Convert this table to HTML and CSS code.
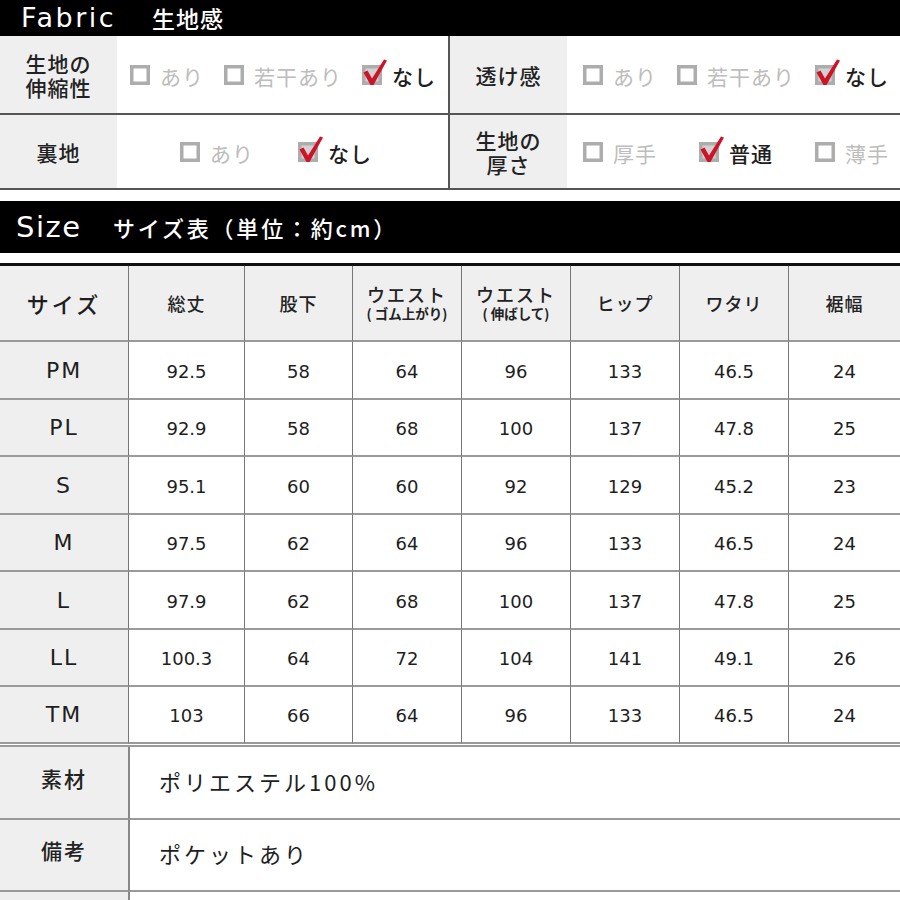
FILE: index.html
```html
<!DOCTYPE html>
<html lang="ja">
<head>
<meta charset="utf-8">
<title>Fabric / Size</title>
<link rel="stylesheet" href="styles.css">
</head>
<body>
<svg class="defs" width="0" height="0" aria-hidden="true">
  <symbol id="cb-off" viewBox="0 0 26 28">
    <rect x="1.75" y="7.75" width="16.5" height="16.5" fill="#fff" stroke="#adadad" stroke-width="3.5"/>
  </symbol>
  <symbol id="cb-on" viewBox="0 0 26 28">
    <rect x="1.75" y="7.75" width="16.5" height="16.5" fill="#d2d2d2" stroke="#adadad" stroke-width="3.5"/>
    <path d="M1.5 13.5 L5.5 11.5 L10 19.5 L22 0.5 L25 1.5 L11.5 26 L8.5 26 Z" fill="#cc1426"/>
  </symbol>
</svg>
<div class="page">
  <div class="bar bar-fabric"><span class="bar-en">Fabric</span><span class="bar-ja">生地感</span></div>
  <div class="fab">
    <div class="fab-row r1">
      <div class="fab-label">生地の<br>伸縮性</div>
      <div class="opts">
        <span class="opt off"><svg class="cb"><use href="#cb-off"/></svg>あり</span>
        <span class="opt off"><svg class="cb"><use href="#cb-off"/></svg>若干あり</span>
        <span class="opt on"><svg class="cb"><use href="#cb-on"/></svg>なし</span>
      </div>
      <div class="fab-label">透け感</div>
      <div class="opts right">
        <span class="opt off"><svg class="cb"><use href="#cb-off"/></svg>あり</span>
        <span class="opt off"><svg class="cb"><use href="#cb-off"/></svg>若干あり</span>
        <span class="opt on"><svg class="cb"><use href="#cb-on"/></svg>なし</span>
      </div>
    </div>
    <div class="fab-row r2">
      <div class="fab-label">裏地</div>
      <div class="opts pair">
        <span class="opt off"><svg class="cb"><use href="#cb-off"/></svg>あり</span>
        <span class="opt on"><svg class="cb"><use href="#cb-on"/></svg>なし</span>
      </div>
      <div class="fab-label">生地の<br>厚さ</div>
      <div class="opts right wide">
        <span class="opt off"><svg class="cb"><use href="#cb-off"/></svg>厚手</span>
        <span class="opt on"><svg class="cb"><use href="#cb-on"/></svg>普通</span>
        <span class="opt off"><svg class="cb"><use href="#cb-off"/></svg>薄手</span>
      </div>
    </div>
  </div>

  <div class="bar bar-size"><span class="bar-en">Size</span><span class="bar-ja">サイズ表（単位：約cm）</span></div>

  <div class="size-table">
    <div class="c h lab big">サイズ</div>
    <div class="c h">総丈</div>
    <div class="c h">股下</div>
    <div class="c h two"><span class="l1">ウエスト</span><span class="l2">( ゴム上がり)</span></div>
    <div class="c h two"><span class="l1">ウエスト</span><span class="l2">( 伸ばして)</span></div>
    <div class="c h">ヒップ</div>
    <div class="c h">ワタリ</div>
    <div class="c h last">裾幅</div>

    <div class="c lab">PM</div><div class="c n">92.5</div><div class="c n">58</div><div class="c n">64</div><div class="c n">96</div><div class="c n">133</div><div class="c n">46.5</div><div class="c n last">24</div>
    <div class="c lab">PL</div><div class="c n">92.9</div><div class="c n">58</div><div class="c n">68</div><div class="c n">100</div><div class="c n">137</div><div class="c n">47.8</div><div class="c n last">25</div>
    <div class="c lab">S</div><div class="c n">95.1</div><div class="c n">60</div><div class="c n">60</div><div class="c n">92</div><div class="c n">129</div><div class="c n">45.2</div><div class="c n last">23</div>
    <div class="c lab">M</div><div class="c n">97.5</div><div class="c n">62</div><div class="c n">64</div><div class="c n">96</div><div class="c n">133</div><div class="c n">46.5</div><div class="c n last">24</div>
    <div class="c lab">L</div><div class="c n">97.9</div><div class="c n">62</div><div class="c n">68</div><div class="c n">100</div><div class="c n">137</div><div class="c n">47.8</div><div class="c n last">25</div>
    <div class="c lab">LL</div><div class="c n">100.3</div><div class="c n">64</div><div class="c n">72</div><div class="c n">104</div><div class="c n">141</div><div class="c n">49.1</div><div class="c n last">26</div>
    <div class="c lab">TM</div><div class="c n">103</div><div class="c n">66</div><div class="c n">64</div><div class="c n">96</div><div class="c n">133</div><div class="c n">46.5</div><div class="c n last">24</div>
  </div>

  <div class="notes">
    <div class="note-label">素材</div><div class="note-val">ポリエステル100%</div>
    <div class="note-label">備考</div><div class="note-val">ポケットあり</div>
    <div class="note-label"></div><div class="note-val"></div>
  </div>
</div>
</body>
</html>
```

FILE: styles.css
```css
* { box-sizing: border-box; }
html, body { margin: 0; padding: 0; background: #fff; }
body {
  font-family: "Noto Sans CJK JP", "Noto Sans", sans-serif;
  color: #222;
}
.defs { position: absolute; width: 0; height: 0; overflow: hidden; }
.page { width: 900px; height: 900px; overflow: hidden; }

/* black section bars */
.bar {
  background: #000;
  color: #fff;
  display: flex;
  align-items: center;
}
.bar-fabric { height: 36px; padding-left: 21px; }
.bar-fabric .bar-en {
  font-family: "DejaVu Sans", sans-serif;
  font-size: 27px;
  letter-spacing: 2.5px;
  width: 131px;
  margin-top: -2px;
}
.bar-fabric .bar-ja { font-size: 23px; font-weight: 500; letter-spacing: 1px; }
.bar-size { height: 52px; margin-top: 11px; padding-left: 16px; }
.bar-size .bar-en {
  font-family: "DejaVu Sans", sans-serif;
  font-size: 29px;
  letter-spacing: 1.5px;
  width: 97px;
}
.bar-size .bar-ja { font-size: 22px; font-weight: 500; letter-spacing: 2.8px; }

/* fabric table */
.fab-row {
  display: grid;
  grid-template-columns: 117px 333px 117px 333px;
  border-bottom: 2px solid #555;
}
.fab-row.r1 { height: 79px; }
.fab-row.r2 { height: 75px; }
.fab-label {
  background: #efefef;
  display: flex;
  align-items: center;
  justify-content: center;
  text-align: center;
  font-size: 21px;
  line-height: 24px;
  font-weight: 500;
  letter-spacing: 1px;
  color: #222;
}
.opts {
  display: flex;
  align-items: center;
  padding-left: 13px;
  gap: 20px;
  border-right: 2px solid #555;
}
.opts.right { border-right: 0; padding-left: 16px; }
.opts.pair { padding-left: 63px; gap: 44px; }
.opts.wide { gap: 42px; }
.opt {
  display: flex;
  align-items: center;
  font-size: 21px;
  letter-spacing: 1px;
  white-space: nowrap;
  padding-top: 3px;
}
.opt.off { color: #bdbdbd; }
.opt.on { color: #1e1e1e; font-weight: 500; }
.cb { width: 26px; height: 28px; margin-right: 4px; margin-top: -6px; flex: none; }

/* size table */
.size-table {
  margin-top: 10px;
  border-top: 3px solid #111;
  display: grid;
  grid-template-columns: 129px 116px 108px 109px 109px 109px 109px 111px;
  grid-template-rows: 76px 58px 57px 58px 57px 58px 57px 57px;
}
.c {
  display: flex;
  align-items: center;
  justify-content: center;
  border-right: 1px solid #777;
  border-bottom: 2px solid #9a9a9a;
  text-align: center;
}
.c.last { border-right: 0; }
.c.h {
  background: #efefef;
  font-size: 18px;
  font-weight: 500;
  letter-spacing: 1px;
  color: #222;
}
.c.h.big { font-size: 22px; letter-spacing: 3px; }
.c.h.two { flex-direction: column; line-height: 1.25; }
.c.h.two .l1 { font-size: 18px; letter-spacing: 2px; line-height: 20px; }
.c.h.two .l2 { font-size: 13.5px; font-weight: 700; letter-spacing: 0; line-height: 18px; }
.c.lab {
  background: #efefef;
  font-family: "DejaVu Sans", sans-serif;
  font-size: 22px;
  letter-spacing: 2px;
  color: #1e1e1e;
}
.c.h.lab { font-family: "Noto Sans CJK JP", sans-serif; }
.c.n {
  font-family: "DejaVu Sans", sans-serif;
  font-size: 18px;
  color: #1e1e1e;
  padding-top: 2px;
}

/* notes */
.notes {
  margin-top: 1px;
  border-top: 2px solid #9a9a9a;
  display: grid;
  grid-template-columns: 130px 1fr;
  grid-template-rows: 73px 72px 20px;
}
.note-label {
  background: #efefef;
  border-right: 2px solid #888;
  border-bottom: 2px solid #9a9a9a;
  display: flex;
  align-items: center;
  justify-content: center;
  font-size: 21px;
  font-weight: 500;
  letter-spacing: 2px;
  padding-bottom: 10px;
}
.note-val {
  border-bottom: 2px solid #9a9a9a;
  display: flex;
  align-items: center;
  padding-left: 29px;
  padding-bottom: 4px;
  font-size: 22px;
  letter-spacing: 3px;
  color: #1e1e1e;
}
```
